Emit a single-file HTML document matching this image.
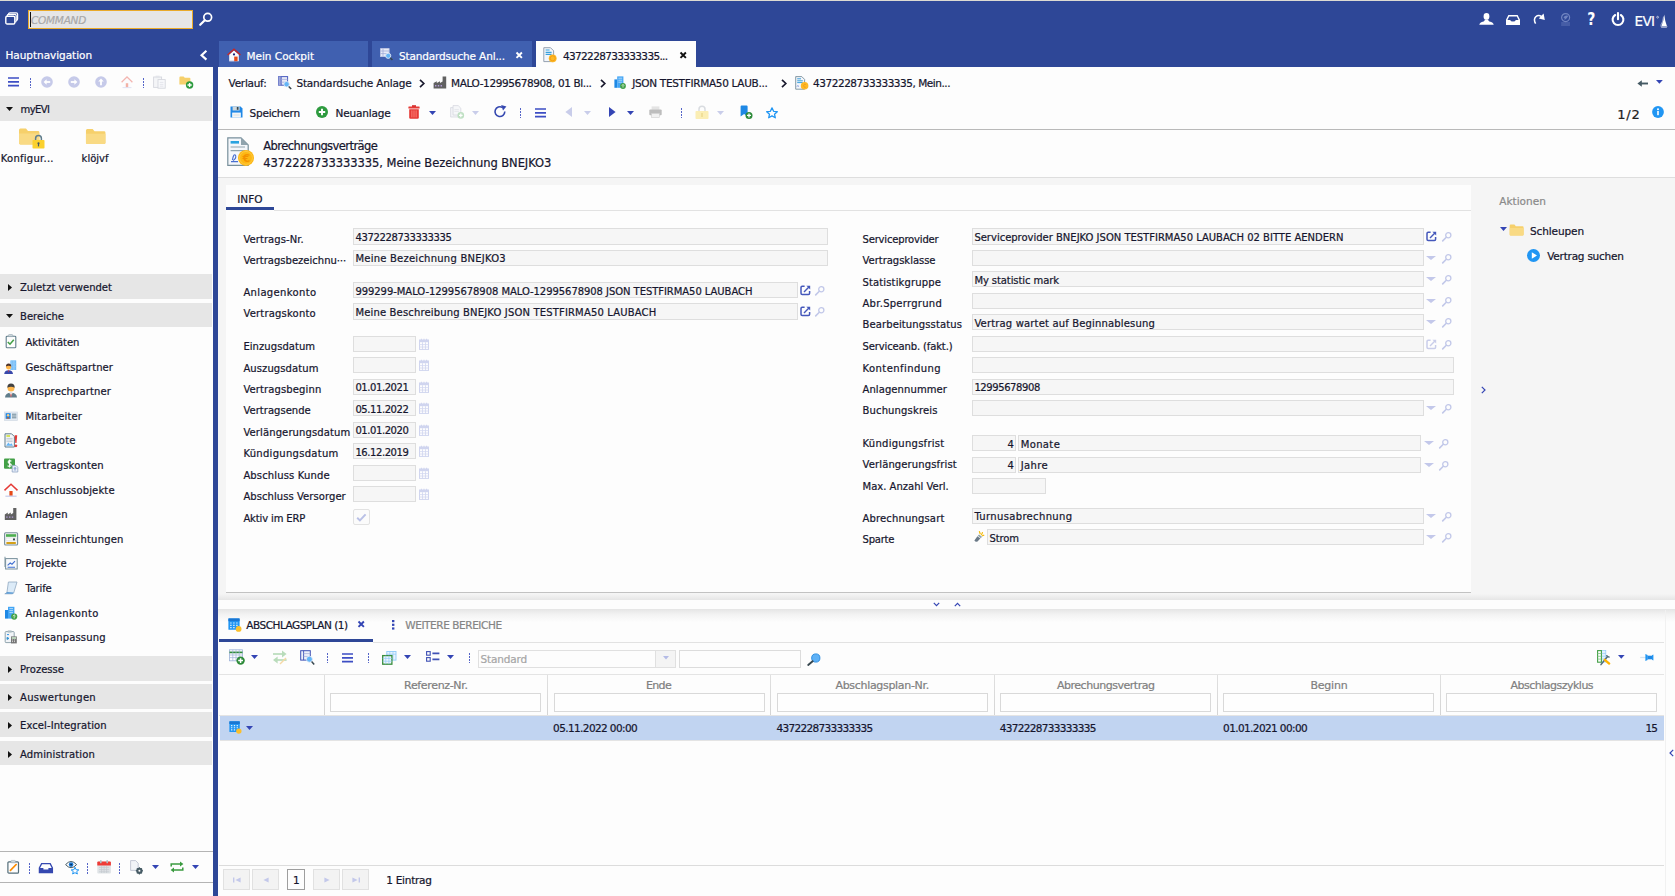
<!DOCTYPE html>
<html lang="de"><head><meta charset="utf-8"><title>EVI - Abrechnungsverträge</title>
<style>
html,body{margin:0;padding:0}
body{width:1675px;height:896px;overflow:hidden;position:relative;background:#fdfdfd;font-family:"DejaVu Sans", "Liberation Sans", sans-serif;font-size:10px}
body>div,body>span,body>svg{position:absolute;box-sizing:border-box}
body>span{white-space:pre;line-height:20px;height:20px;-webkit-text-stroke:0.22px}
body>svg{overflow:visible}
</style></head><body>
<div style="left:0px;top:0px;width:1675px;height:67px;background:#2e4797;"></div>
<div style="left:0px;top:0px;width:1675px;height:1px;background:#dcdad2;"></div>
<svg style="left:5px;top:12px" width="14" height="13" viewBox="0 0 14 13"><rect x="3.6" y="0.8" width="9" height="7.6" rx="1.3" fill="none" stroke="#fff" stroke-width="1.2"/><rect x="2.2" y="2.4" width="9" height="7.6" rx="1.3" fill="#2e4797" stroke="#fff" stroke-width="1.2"/><rect x="0.8" y="4.2" width="9" height="7.8" rx="1.3" fill="#2e4797" stroke="#fff" stroke-width="1.4"/></svg>
<div style="left:28px;top:10px;width:165px;height:19px;background:#e6e6e6;border:1px solid #e9aa2b;"></div>
<div style="left:30px;top:12px;width:1px;height:15px;background:#111;"></div>
<span style="left:31.00px;top:10px;font-size:10.5px;color:#a9a9a9;letter-spacing:-0.263px;font-style:italic;">COMMAND</span>
<svg style="left:199px;top:12px" width="14" height="14" viewBox="0 0 14 14"><circle cx="8.7" cy="5.3" r="3.9" fill="none" stroke="#fff" stroke-width="1.7"/><path d="M5.8 8.2L1.2 12.8" stroke="#fff" stroke-width="2.2" stroke-linecap="round"/></svg>
<svg style="left:1479px;top:13px" width="15" height="12" viewBox="0 0 15 12"><ellipse cx="7.5" cy="3.4" rx="2.9" ry="3.3" fill="#fff"/><path d="M0.3 11.8Q0.5 9.4 4.6 8.4Q5.8 8 5.8 6.4H9.2Q9.2 8 10.4 8.4Q14.5 9.4 14.7 11.8Z" fill="#fff"/></svg>
<svg style="left:1505.5px;top:15.3px" width="14" height="10" viewBox="0 0 14 10"><path d="M2.8 0.7H11.2L13.3 4.9V9.3H0.7V4.9Z" fill="none" stroke="#fff" stroke-width="1.4"/><path d="M0.7 5H4.2Q4.6 6.6 7 6.6Q9.4 6.6 9.8 5H13.3V9.3H0.7Z" fill="#fff"/></svg>
<svg style="left:1533px;top:13px" width="13" height="12" viewBox="0 0 13 12"><path d="M2.6 10.6Q0.2 6.4 2.8 3.8Q5.4 1.4 8.6 3.6" fill="none" stroke="#fff" stroke-width="1.5"/><path d="M10.6 0.6L11.8 7L5.8 5.6Z" fill="#fff"/></svg>
<svg style="left:1560px;top:13px" width="11" height="13" viewBox="0 0 11 13"><circle cx="5.6" cy="4.6" r="4" fill="none" stroke="#7084c1" stroke-width="1.2"/><path d="M3.4 4.2Q5.4 1.6 8.2 2.8Q7.4 5.6 4.6 7Q5.4 5.2 3.4 4.2Z" fill="#7084c1"/><path d="M1.2 10H10M1.2 12H10" stroke="#6579b9" stroke-width="0.9"/></svg>
<svg style="left:1586px;top:11px" width="12" height="16" viewBox="0 0 12 16"><text x="1.6" y="14.4" transform="scale(0.8 1)" font-family="DejaVu Sans, Liberation Sans, sans-serif" font-size="17.5" font-weight="bold" fill="#fff">?</text></svg>
<svg style="left:1611px;top:12px" width="14" height="14" viewBox="0 0 14 14"><path d="M4.2 3A5.4 5.4 0 1 0 9.8 3" fill="none" stroke="#fff" stroke-width="2.1" stroke-linecap="round"/><path d="M7 1V7.2" stroke="#fff" stroke-width="2.1" stroke-linecap="round"/></svg>
<span style="left:1634.60px;top:11px;font-size:13.5px;color:#fff;letter-spacing:-0.650px;">EVI</span>
<svg style="left:1655.5px;top:14px" width="12" height="14" viewBox="0 0 12 14"><circle cx="1.6" cy="3.2" r="0.9" fill="none" stroke="#fff" stroke-width="0.6"/><path d="M8.2 0.4Q9 7 10.9 12H5.4Q8 6.5 8.2 0.4Z" fill="#fff"/><path d="M7.6 2.5Q7 8 4.6 11.6" stroke="#fff" stroke-width="0.5" fill="none"/><path d="M4.4 12.6H11.6L10.6 13.6H5.4Z" fill="#fff"/></svg>
<span style="left:5.50px;top:45px;font-size:10.5px;color:#fff;letter-spacing:-0.047px;">Hauptnavigation</span>
<svg style="left:199.5px;top:49.5px" width="8" height="11" viewBox="0 0 8 11"><path d="M6.4 0.8L1.6 5.2L6.4 9.6" fill="none" stroke="#fff" stroke-width="2.2"/></svg>
<div style="left:219px;top:41px;width:149px;height:26px;background:#4060b0;"></div>
<div style="left:372px;top:41px;width:160px;height:26px;background:#4060b0;"></div>
<div style="left:536px;top:41px;width:160px;height:26px;background:#fdfdfd;"></div>
<svg style="left:227px;top:47.5px" width="14" height="14" viewBox="0 0 14 14"><path d="M2.2 6.6L7 2.4L11.8 6.6V13.2H2.2Z" fill="#fafafc"/><path d="M0.6 7L7 1.2L13.4 7" fill="none" stroke="#c62828" stroke-width="1.5"/><circle cx="7" cy="6.4" r="1.1" fill="#1a237e"/><rect x="7.2" y="8.6" width="3.4" height="4.6" fill="#e64a19"/><path d="M2.2 12.8H7" stroke="#c5cae9" stroke-width="0.8"/></svg>
<span style="left:246.50px;top:46px;font-size:10.5px;color:#fff;letter-spacing:-0.021px;">Mein Cockpit</span>
<svg style="left:380px;top:48px" width="13" height="13" viewBox="0 0 13 13"><rect x="0.6" y="0.6" width="8.5" height="8" fill="#e8ecf8" stroke="#c7cde6" stroke-width="0.8"/><path d="M3 0.6V8.6M0.6 3H9M0.6 5.6H9" stroke="#9aa6d6" stroke-width="0.7"/><circle cx="8.2" cy="7.8" r="2.6" fill="#64b5f6" stroke="#dfe6f5" stroke-width="0.9"/><path d="M10.2 9.8L12.4 12" stroke="#37474f" stroke-width="1.5"/></svg>
<span style="left:399.00px;top:46px;font-size:10.5px;color:#fff;letter-spacing:-0.145px;">Standardsuche Anl...</span>
<svg style="left:516.0px;top:52.4px" width="6.4" height="6.4" viewBox="0 0 6.4 6.4"><path d="M0.5 0.5L5.9 5.9M5.9 0.5L0.5 5.9" stroke="#fff" stroke-width="1.9"/></svg>
<svg style="left:543px;top:47px" width="14" height="16" viewBox="0 0 14 16"><path d="M0.8 0.7H7.5L10.6 3.8V14.6H0.8Z" fill="#f3f6fb" stroke="#8a97a8" stroke-width="0.9"/><path d="M2.6 3H6.6M2.6 5.4H8.6M2.6 7.4H8.6" stroke="#39a0dc" stroke-width="1.1"/><circle cx="9.7" cy="11.3" r="3.9" fill="#fdb827"/><circle cx="9.7" cy="11.3" r="2.5" fill="none" stroke="#f09a12" stroke-width="0.8"/></svg>
<span style="left:563.00px;top:46px;font-size:10.5px;color:#16162e;letter-spacing:-0.653px;">4372228733333335...</span>
<svg style="left:680.0999999999999px;top:52.4px" width="6.4" height="6.4" viewBox="0 0 6.4 6.4"><path d="M0.5 0.5L5.9 5.9M5.9 0.5L0.5 5.9" stroke="#111" stroke-width="1.9"/></svg>
<div style="left:0px;top:67px;width:213px;height:829px;background:#fdfdfd;"></div>
<div style="left:213px;top:67px;width:5px;height:829px;background:#2e4797;"></div>
<svg style="left:7.5px;top:77px" width="12" height="10" viewBox="0 0 12 10"><path d="M0 1H11M0 4.8H11M0 8.6H11" stroke="#3d4ec4" stroke-width="1.7"/></svg>
<div style="left:30px;top:78px;width:1px;height:10px;background:repeating-linear-gradient(#5565c8 0,#5565c8 2px,transparent 2px,transparent 3px)"></div>
<svg style="left:41px;top:76px" width="12" height="12" viewBox="0 0 12 12"><circle cx="6" cy="6" r="5.8" fill="#c6cae9"/><g transform="rotate(0 6 6)"><path d="M9.2 6H4" stroke="#fff" stroke-width="1.8"/><path d="M5.6 3.2L2.6 6L5.6 8.8Z" fill="#fff"/></g></svg>
<svg style="left:68px;top:76px" width="12" height="12" viewBox="0 0 12 12"><circle cx="6" cy="6" r="5.8" fill="#c6cae9"/><g transform="rotate(180 6 6)"><path d="M9.2 6H4" stroke="#fff" stroke-width="1.8"/><path d="M5.6 3.2L2.6 6L5.6 8.8Z" fill="#fff"/></g></svg>
<svg style="left:94.5px;top:76px" width="12" height="12" viewBox="0 0 12 12"><circle cx="6" cy="6" r="5.8" fill="#c6cae9"/><g transform="rotate(90 6 6)"><path d="M9.2 6H4" stroke="#fff" stroke-width="1.8"/><path d="M5.6 3.2L2.6 6L5.6 8.8Z" fill="#fff"/></g></svg>
<svg style="left:121px;top:76px" width="12" height="12" viewBox="0 0 12 12"><path d="M0.6 6.2L6 1L11.4 6.2" fill="none" stroke="#f3b6b1" stroke-width="1.3"/><path d="M2.3 6L6 2.6L9.7 6V11.4H2.3Z" fill="#fbfbfd"/><rect x="4.8" y="7.2" width="2.4" height="4.2" fill="#f2b1a6"/><path d="M1.5 11.6H10.5" stroke="#dcdff3" stroke-width="0.9"/></svg>
<div style="left:143px;top:78px;width:1px;height:10px;background:repeating-linear-gradient(#5565c8 0,#5565c8 2px,transparent 2px,transparent 3px)"></div>
<svg style="left:153px;top:75px" width="13" height="14" viewBox="0 0 13 14"><rect x="0.6" y="2" width="8" height="10.4" fill="#f4f5f7" stroke="#d5d7de" stroke-width="0.9"/><rect x="2.6" y="0.7" width="4" height="2.4" fill="#e3e5ea"/><rect x="5" y="4.6" width="7.2" height="8.6" fill="#f8f9fb" stroke="#d5d7de" stroke-width="0.9"/><path d="M6.8 7.4H10.4M6.8 9.4H10.4M6.8 11.2H10.4" stroke="#dfe1e8" stroke-width="0.8"/></svg>
<svg style="left:179px;top:76px" width="15" height="13" viewBox="0 0 15 13"><path d="M0.4 1.4Q0.4 0.4 1.4 0.4H4.6L5.8 1.8H10.4Q11.4 1.8 11.4 2.8V8.6H0.4Z" fill="#f6d06b"/><circle cx="10.6" cy="9" r="3.7" fill="#2e9b3f"/><path d="M10.6 6.9V11.1M8.5 9H12.7" stroke="#fff" stroke-width="1.4"/></svg>
<div style="left:0px;top:96px;width:212px;height:25px;background:#e6e6e6;"></div>
<svg style="left:5.5px;top:107px" width="7" height="4" viewBox="0 0 7 4"><path d="M0 0H7L3.5 4Z" fill="#111"/></svg>
<span style="left:20.50px;top:100px;font-size:10px;color:#16162e;letter-spacing:-0.556px;">myEVI</span>
<svg style="left:18px;top:128px" width="22" height="17" viewBox="0 0 22 17"><path d="M1 2.2Q1 0.6 2.4 0.6H8L10 3H20Q21.4 3 21.4 4.4V15Q21.4 16.4 20 16.4H2.4Q1 16.4 1 15Z" fill="#f6d06b"/><path d="M1 5.5H21.4V15Q21.4 16.4 20 16.4H2.4Q1 16.4 1 15Z" fill="#f9da84"/></svg>
<svg style="left:32px;top:134px" width="13" height="15" viewBox="0 0 13 15"><path d="M3.6 6.5V4.4A2.9 2.9 0 0 1 9.4 4.4V6.5" fill="none" stroke="#607d8b" stroke-width="1.5"/><rect x="0.5" y="6" width="12" height="8.5" rx="0.8" fill="#fbd12e"/><circle cx="6.5" cy="9.3" r="1.1" fill="#455a64"/><rect x="5.9" y="9.6" width="1.2" height="2.8" fill="#455a64"/></svg>
<svg style="left:85px;top:128px" width="21" height="17" viewBox="0 0 22 17"><path d="M1 2.2Q1 0.6 2.4 0.6H8L10 3H20Q21.4 3 21.4 4.4V15Q21.4 16.4 20 16.4H2.4Q1 16.4 1 15Z" fill="#f6d06b"/><path d="M1 5.5H21.4V15Q21.4 16.4 20 16.4H2.4Q1 16.4 1 15Z" fill="#f9da84"/></svg>
<span style="left:0.80px;top:149px;font-size:10px;color:#16162e;letter-spacing:0.251px;">Konfigur...</span>
<span style="left:81.60px;top:149px;font-size:10px;color:#16162e;letter-spacing:0.016px;">klöjvf</span>
<div style="left:0px;top:274px;width:212px;height:25px;background:#e6e6e6;"></div>
<svg style="left:8px;top:284px" width="4" height="7" viewBox="0 0 4 7"><path d="M0 0L4 3.5L0 7Z" fill="#111"/></svg>
<span style="left:20.00px;top:278px;font-size:10px;color:#16162e;letter-spacing:0.019px;">Zuletzt verwendet</span>
<div style="left:0px;top:303px;width:212px;height:24px;background:#e6e6e6;"></div>
<svg style="left:5.8px;top:314px" width="7" height="4" viewBox="0 0 7 4"><path d="M0 0H7L3.5 4Z" fill="#111"/></svg>
<span style="left:20.00px;top:307px;font-size:10px;color:#16162e;letter-spacing:0.021px;">Bereiche</span>
<div style="left:0px;top:656px;width:212px;height:25px;background:#e6e6e6;"></div>
<svg style="left:8px;top:666px" width="4" height="7" viewBox="0 0 4 7"><path d="M0 0L4 3.5L0 7Z" fill="#111"/></svg>
<span style="left:20.00px;top:660px;font-size:10px;color:#16162e;letter-spacing:0.020px;">Prozesse</span>
<div style="left:0px;top:684px;width:212px;height:25px;background:#e6e6e6;"></div>
<svg style="left:8px;top:694px" width="4" height="7" viewBox="0 0 4 7"><path d="M0 0L4 3.5L0 7Z" fill="#111"/></svg>
<span style="left:20.00px;top:688px;font-size:10px;color:#16162e;letter-spacing:0.311px;">Auswertungen</span>
<div style="left:0px;top:712px;width:212px;height:25px;background:#e6e6e6;"></div>
<svg style="left:8px;top:722px" width="4" height="7" viewBox="0 0 4 7"><path d="M0 0L4 3.5L0 7Z" fill="#111"/></svg>
<span style="left:20.00px;top:716px;font-size:10px;color:#16162e;letter-spacing:0.088px;">Excel-Integration</span>
<div style="left:0px;top:741px;width:212px;height:24px;background:#e6e6e6;"></div>
<svg style="left:8px;top:751px" width="4" height="7" viewBox="0 0 4 7"><path d="M0 0L4 3.5L0 7Z" fill="#111"/></svg>
<span style="left:20.00px;top:745px;font-size:10px;color:#16162e;letter-spacing:0.129px;">Administration</span>
<span style="left:25.40px;top:333px;font-size:10px;color:#16162e;letter-spacing:-0.045px;">Aktivitäten</span>
<span style="left:25.40px;top:358px;font-size:10px;color:#16162e;letter-spacing:0.052px;">Geschäftspartner</span>
<span style="left:25.40px;top:382px;font-size:10px;color:#16162e;letter-spacing:0.124px;">Ansprechpartner</span>
<span style="left:25.40px;top:407px;font-size:10px;color:#16162e;letter-spacing:0.143px;">Mitarbeiter</span>
<span style="left:25.40px;top:431px;font-size:10px;color:#16162e;letter-spacing:0.273px;">Angebote</span>
<span style="left:25.40px;top:456px;font-size:10px;color:#16162e;letter-spacing:0.146px;">Vertragskonten</span>
<span style="left:25.40px;top:481px;font-size:10px;color:#16162e;letter-spacing:0.142px;">Anschlussobjekte</span>
<span style="left:25.40px;top:505px;font-size:10px;color:#16162e;letter-spacing:0.209px;">Anlagen</span>
<span style="left:25.40px;top:530px;font-size:10px;color:#16162e;letter-spacing:0.215px;">Messeinrichtungen</span>
<span style="left:25.40px;top:554px;font-size:10px;color:#16162e;letter-spacing:0.091px;">Projekte</span>
<span style="left:25.40px;top:579px;font-size:10px;color:#16162e;letter-spacing:-0.176px;">Tarife</span>
<span style="left:25.40px;top:604px;font-size:10px;color:#16162e;letter-spacing:0.370px;">Anlagenkonto</span>
<span style="left:25.40px;top:628px;font-size:10px;color:#16162e;letter-spacing:0.144px;">Preisanpassung</span>
<svg style="left:3.9px;top:334px" width="14" height="15" viewBox="0 0 14 15"><rect x="2.2" y="2.2" width="9.6" height="11.6" rx="0.9" fill="#fdfdfd" stroke="#607d8b" stroke-width="1.1"/><path d="M4.4 2.6V1.4Q4.4 0.6 5.2 0.6H8Q8.8 0.6 8.8 1.4V2.6Z" fill="#cfd8dc" stroke="#90a4ae" stroke-width="0.6"/><path d="M3.8 8L6 10.2L9.8 5.8" fill="none" stroke="#43a047" stroke-width="1.6"/></svg>
<svg style="left:3.9px;top:360px" width="14" height="14" viewBox="0 0 14 14"><rect x="6.4" y="0.4" width="5.8" height="9.6" fill="#64b5f6"/><path d="M7.8 0.8V10M9.3 0.8V10M10.8 0.8V10" stroke="#bbdefb" stroke-width="0.6"/><path d="M6.4 3.4H12.2M6.4 6.4H12.2" stroke="#90caf9" stroke-width="0.5"/><circle cx="4.6" cy="6.8" r="2.6" fill="#ffb74d"/><path d="M1.9 6.6Q2 3.6 4.6 3.6Q7.2 3.6 7.3 6.6Q4.6 5 1.9 6.6Z" fill="#4e342e"/><path d="M0.2 14Q0.4 10.2 4.6 10.2Q8.8 10.2 9 14Z" fill="#3949ab"/><path d="M3.8 10.4L4.6 12L5.4 10.4Z" fill="#e53935"/></svg>
<svg style="left:3.9px;top:383px" width="14" height="15" viewBox="0 0 14 15"><circle cx="7" cy="5" r="3.5" fill="#ffb74d"/><path d="M3.3 4.8Q3.4 0.6 7 0.6Q10.6 0.6 10.7 4.8Q7 2.6 3.3 4.8Z" fill="#424242"/><path d="M1 14.6Q1.2 9.8 7 9.8Q12.8 9.8 13 14.6Z" fill="#607d8b"/><path d="M5.4 9.9L7 12.6L8.6 9.9Z" fill="#eceff1"/><path d="M6.6 10.6H7.4L7.8 13.6H6.2Z" fill="#e57373"/></svg>
<svg style="left:3.9px;top:409px" width="14" height="14" viewBox="0 0 14 14"><rect x="0.6" y="3" width="12.8" height="8.4" fill="#e3eaf3" stroke="#cfd8e3" stroke-width="0.7"/><rect x="1.6" y="4.2" width="5" height="5.6" fill="#1e88e5"/><circle cx="4.1" cy="6.2" r="1.2" fill="#ffcc80"/><path d="M2.4 9.6Q4.1 6.8 5.8 9.6Z" fill="#e65100"/><path d="M8 5.2H12.4M8 7H12.4M8 8.8H12.4" stroke="#607d8b" stroke-width="0.9"/></svg>
<svg style="left:3.9px;top:433px" width="14" height="15" viewBox="0 0 14 15"><path d="M1 0.8H7.6L10.4 3.6V14H1Z" fill="#f5f7fa" stroke="#607d8b" stroke-width="1"/><rect x="2.4" y="2.2" width="3.6" height="1.6" fill="#cddc39"/><path d="M2.4 5.4H8.6M2.4 7H8.6M2.4 8.6H8.6" stroke="#b0bec5" stroke-width="0.7"/><path d="M2 12.8L4.4 9.4L6 11.4L7.4 10.2L9 12.8Z" fill="#64b5f6"/><path d="M10.6 2.2H13.2L12.5 10H11.3Z" fill="#e53935"/><circle cx="11.9" cy="12.8" r="1.4" fill="#e53935"/></svg>
<svg style="left:3.9px;top:458px" width="14" height="14" viewBox="0 0 14 14"><rect x="0" y="0.4" width="11" height="10.4" rx="1" fill="#43a047"/><path d="M7.4 3.2Q5.6 2 4.4 3.2Q3.6 4.6 5.6 5.4Q7.8 6.2 7 7.8Q5.6 9 3.6 7.8M5.6 1.4V9.6" fill="none" stroke="#fff" stroke-width="1.1"/><path d="M8.2 7.4H12L13.8 9.2V14H8.2Z" fill="#e8eef8" stroke="#90a4c4" stroke-width="0.8"/><path d="M11 9.6V12.6M10 10.6L11 9.6L12 10.6" stroke="#5c7bc0" stroke-width="0.8" fill="none"/></svg>
<svg style="left:3.9px;top:483px" width="14" height="14" viewBox="0 0 14 14"><path d="M0.5 7.4L7 1.2L13.5 7.4" fill="none" stroke="#e53935" stroke-width="1.5"/><path d="M2.4 7L7 2.8L11.6 7V12.6H2.4Z" fill="#fdfdfd"/><rect x="5.4" y="8" width="3.2" height="4.8" fill="#e64a19"/><path d="M1.4 13.2H12.6" stroke="#c5cae9" stroke-width="1.2"/></svg>
<svg style="left:3.9px;top:507px" width="14" height="14" viewBox="0 0 14 14"><path d="M0.8 13V7.4L3.8 5.6V7.4L6.8 5.6V7.4L9.2 6V1H12.4V13Z" fill="#616161"/><path d="M2.2 9.4H3.6V10.8H2.2ZM5 9.4H6.4V10.8H5ZM7.8 9.4H9.2V10.8H7.8Z" fill="#b39ddb"/></svg>
<svg style="left:3.9px;top:532px" width="14" height="14" viewBox="0 0 14 14"><rect x="0.6" y="0.8" width="13" height="12.2" rx="1" fill="#f5f5f5" stroke="#78909c" stroke-width="1.1"/><rect x="2" y="2.2" width="10.2" height="2.6" fill="#4caf50"/><rect x="2" y="6" width="10.2" height="2.8" fill="#fafafa" stroke="#cfd8dc" stroke-width="0.5"/><circle cx="10" cy="7.4" r="1.1" fill="#37474f"/><rect x="2.4" y="10" width="9.4" height="2" fill="#d4a017"/></svg>
<svg style="left:3.9px;top:556px" width="14" height="14" viewBox="0 0 14 14"><path d="M1 0.8V11" stroke="#90a4ae" stroke-width="1.2"/><rect x="1.6" y="2.6" width="11.6" height="10.4" fill="#f7f9fc" stroke="#78909c" stroke-width="1"/><path d="M3.6 9.4L6.2 7L8 8.2L11 5.2M3.6 11.2H11" fill="none" stroke="#3f6fd1" stroke-width="1.1"/></svg>
<svg style="left:3.9px;top:581px" width="14" height="14" viewBox="0 0 14 14"><path d="M4.4 1H13L9.8 11.6Q9.4 12.8 8 12.8H0.8Q2.6 12.4 3 11Z" fill="#dcebf8" stroke="#90a8c0" stroke-width="0.8"/><path d="M0.8 12.8H8Q9.4 12.8 9.8 11.6L3 11Q2.6 12.4 0.8 12.8Z" fill="#5b9bd5"/></svg>
<svg style="left:3.9px;top:606px" width="14" height="14" viewBox="0 0 14 14"><rect x="1" y="4" width="3" height="8.6" fill="#1e88e5"/><rect x="4" y="0.8" width="6.4" height="11.8" fill="#42a5f5"/><path d="M5.4 2.6H9M5.4 4.6H9M5.4 6.6H9" stroke="#bbdefb" stroke-width="0.9"/><circle cx="10.2" cy="10.6" r="3.1" fill="#43a047"/><path d="M10.2 12.4V9M8.8 10.2L10.2 8.8L11.6 10.2" stroke="#c8e6c9" stroke-width="0.9" fill="none"/></svg>
<svg style="left:3.9px;top:630px" width="14" height="14" viewBox="0 0 14 14"><rect x="1.2" y="1.6" width="9" height="11" rx="0.8" fill="#f1f4f7" stroke="#90a4ae" stroke-width="1"/><rect x="3.8" y="0.4" width="3.8" height="2.2" fill="#b0bec5"/><path d="M3 4.6H5M3 7.4L5 8.4L3 9.4Z" stroke="#1e88e5" stroke-width="0.9" fill="#8bc34a"/><rect x="7" y="6.4" width="5.8" height="7" fill="#757575"/><rect x="7.8" y="7.2" width="4.2" height="1.6" fill="#c8e6c9"/><path d="M8 10H9M10 10H11M8 11.6H9M10 11.6H11" stroke="#e0e0e0" stroke-width="0.9"/></svg>
<div style="left:0px;top:851px;width:213px;height:1px;background:#b4b4b4;"></div>
<div style="left:0px;top:882px;width:213px;height:1px;background:#b4b4b4;"></div>
<svg style="left:7px;top:860px" width="13" height="14" viewBox="0 0 13 14"><rect x="0.9" y="1.8" width="10.6" height="11.4" rx="1" fill="#fdfdfd" stroke="#546e7a" stroke-width="1.2"/><rect x="4" y="0.4" width="4.4" height="2.4" rx="0.6" fill="#cfd8dc" stroke="#90a4ae" stroke-width="0.5"/><path d="M3 10.8L9.6 4" stroke="#fb8c00" stroke-width="1.7"/></svg>
<div style="left:29px;top:863px;width:1px;height:11px;background:repeating-linear-gradient(#5565c8 0,#5565c8 2px,transparent 2px,transparent 3px)"></div>
<svg style="left:39px;top:863px" width="14" height="10" viewBox="0 0 14 10"><path d="M2.6 0.6H11.2L13.4 5V9.6H0.4V5Z" fill="none" stroke="#3548b0" stroke-width="1.3"/><path d="M0.4 5H4.4V6.4H9.4V5H13.4V9.6H0.4Z" fill="#3548b0"/></svg>
<svg style="left:65px;top:860px" width="15" height="14" viewBox="0 0 15 14"><path d="M0.6 4.6Q6 -1.6 11.6 4.6Q6 10.8 0.6 4.6Z" fill="#fdfdfd" stroke="#455a64" stroke-width="1"/><circle cx="6.1" cy="4.6" r="2.3" fill="#1976d2"/><circle cx="6.1" cy="4.6" r="0.9" fill="#0d2a4a"/><path d="M10 7.2L11.1 9.7L13.8 9.9L11.7 11.6L12.4 14L10 12.7L7.6 14L8.3 11.6L6.2 9.9L8.9 9.7Z" fill="#fdfdfd" stroke="#2196f3" stroke-width="1"/></svg>
<div style="left:87px;top:863px;width:1px;height:11px;background:repeating-linear-gradient(#5565c8 0,#5565c8 2px,transparent 2px,transparent 3px)"></div>
<svg style="left:97px;top:860px" width="14" height="14" viewBox="0 0 14 14"><rect x="0.3" y="1.6" width="13.6" height="12" rx="1" fill="#dfe3e6"/><path d="M0.3 2.6Q0.3 1.6 1.3 1.6H12.9Q13.9 1.6 13.9 2.6V5.4H0.3Z" fill="#ef3b36"/><rect x="3" y="0.2" width="1.6" height="3" fill="#b0bec5"/><rect x="9.4" y="0.2" width="1.6" height="3" fill="#b0bec5"/><path d="M2 7.4H12.2M2 9.6H12.2M2 11.8H12.2M4.6 6V13M7.1 6V13M9.6 6V13" stroke="#c3c9ce" stroke-width="0.7"/></svg>
<div style="left:119px;top:863px;width:1px;height:11px;background:repeating-linear-gradient(#5565c8 0,#5565c8 2px,transparent 2px,transparent 3px)"></div>
<svg style="left:130px;top:860px" width="14" height="15" viewBox="0 0 14 15"><path d="M0.6 0.6H5.6L8.2 3.2V10.4H0.6Z" fill="#f2f4f8" stroke="#b7bdcb" stroke-width="0.8"/><circle cx="9.4" cy="10.8" r="2.4" fill="none" stroke="#455a64" stroke-width="1.5"/><path d="M9.4 7.2V14.4M5.8 10.8H13M6.9 8.3L11.9 13.3M11.9 8.3L6.9 13.3" stroke="#455a64" stroke-width="1.1"/><circle cx="9.4" cy="10.8" r="1" fill="#fdfdfd"/></svg>
<svg style="left:151.5px;top:865px" width="7" height="4" viewBox="0 0 7 4"><path d="M0 0H7L3.5 4Z" fill="#3445b4"/></svg>
<svg style="left:170px;top:861px" width="14" height="12" viewBox="0 0 14 12"><path d="M1.2 5.4V3H11.4" fill="none" stroke="#3a9a3f" stroke-width="1.5"/><path d="M10 0.4L13.4 3L10 5.6Z" fill="#3a9a3f"/><path d="M12.8 6.6V9H2.6" fill="none" stroke="#3a9a3f" stroke-width="1.5"/><path d="M4 6.4L0.6 9L4 11.6Z" fill="#3a9a3f"/></svg>
<svg style="left:191.5px;top:865px" width="7" height="4" viewBox="0 0 7 4"><path d="M0 0H7L3.5 4Z" fill="#3445b4"/></svg>
<div style="left:218px;top:67px;width:1457px;height:62px;background:#fdfdfd;"></div>
<span style="left:228.60px;top:73px;font-size:10.5px;color:#16162e;letter-spacing:-0.277px;">Verlauf:</span>
<svg style="left:277.5px;top:75.5px" width="14" height="14" viewBox="0 0 14 14"><rect x="0.6" y="0.6" width="9" height="8.6" fill="#e8eaf6" stroke="#4a5bbf" stroke-width="1"/><rect x="0.6" y="0.6" width="2.6" height="8.6" fill="#9fa8da"/><path d="M3.2 0.6V9.2" stroke="#4a5bbf" stroke-width="0.9"/><path d="M3.2 3.4H9.6M3.2 6.2H9.6" stroke="#9fa8da" stroke-width="0.7"/><circle cx="8.6" cy="8.2" r="2.7" fill="#64b5f6" stroke="#e3ecf8" stroke-width="0.8"/><path d="M10.7 10.4L13.2 13" stroke="#37474f" stroke-width="1.5"/></svg>
<span style="left:296.40px;top:73px;font-size:10.5px;color:#16162e;letter-spacing:-0.162px;">Standardsuche Anlage</span>
<svg style="left:419px;top:78.5px" width="6" height="9" viewBox="0 0 6 9"><path d="M1 0.8L4.8 4.5L1 8.2" fill="none" stroke="#1a1a2e" stroke-width="1.7"/></svg>
<svg style="left:432.5px;top:76px" width="14" height="13" viewBox="0 0 14 13"><path d="M0.6 12.6V7L3.8 5.2V7L7 5.2V7L9.6 5.6V0.6H13.2V12.6Z" fill="#616161"/><path d="M2 9H3.4V10.4H2ZM4.8 9H6.2V10.4H4.8ZM7.6 9H9V10.4H7.6Z" fill="#b39ddb"/></svg>
<span style="left:451.10px;top:73px;font-size:10.5px;color:#16162e;letter-spacing:-0.410px;">MALO-12995678908, 01 Bl...</span>
<svg style="left:600.3px;top:78.5px" width="6" height="9" viewBox="0 0 6 9"><path d="M1 0.8L4.8 4.5L1 8.2" fill="none" stroke="#1a1a2e" stroke-width="1.7"/></svg>
<svg style="left:614px;top:75.5px" width="12" height="13" viewBox="0 0 12 13"><rect x="0.4" y="3.4" width="2.8" height="8.4" fill="#1e88e5"/><rect x="3.2" y="0.4" width="6.2" height="11.4" fill="#42a5f5"/><path d="M4.4 2.2H8.2M4.4 4.2H8.2M4.4 6.2H8.2" stroke="#bbdefb" stroke-width="0.9"/><circle cx="9" cy="10" r="2.9" fill="#43a047"/><path d="M9 11.6V8.6M7.8 9.6L9 8.4L10.2 9.6" stroke="#c8e6c9" stroke-width="0.9" fill="none"/></svg>
<span style="left:632.20px;top:73px;font-size:10.5px;color:#16162e;letter-spacing:-0.317px;">JSON TESTFIRMA50 LAUB...</span>
<svg style="left:780.7px;top:78.5px" width="6" height="9" viewBox="0 0 6 9"><path d="M1 0.8L4.8 4.5L1 8.2" fill="none" stroke="#1a1a2e" stroke-width="1.7"/></svg>
<svg style="left:794.5px;top:75.5px" width="14" height="14" viewBox="0 0 14 14"><path d="M0.7 0.6H6.8L9.6 3.4V13.2H0.7Z" fill="#f3f6fb" stroke="#78909c" stroke-width="0.9"/><path d="M2.2 2.8H6M2.2 4.8H7.8M2.2 6.6H7.8" stroke="#39a0dc" stroke-width="1"/><path d="M2 10.6Q3 8.4 3.6 10.6" fill="none" stroke="#5c7bd0" stroke-width="0.8"/><circle cx="9.6" cy="9.8" r="3.8" fill="#fdb827"/><path d="M10.8 8.4Q9.2 7.4 8.6 9.8Q9.2 12.2 10.8 11.2" fill="none" stroke="#f09a12" stroke-width="0.8"/></svg>
<span style="left:813.10px;top:73px;font-size:10.5px;color:#16162e;letter-spacing:-0.467px;">4372228733333335, Mein...</span>
<svg style="left:1636.5px;top:79.4px" width="12" height="9" viewBox="0 0 12 9"><path d="M11 4.5H3.4" stroke="#455a64" stroke-width="1.9"/><path d="M0.4 4.5L4.8 1.2V7.8Z" fill="#455a64"/></svg>
<svg style="left:1656.2px;top:80.2px" width="6.8" height="3.8" viewBox="0 0 6.8 3.8"><path d="M0 0H6.8L3.4 3.8Z" fill="#3445b4"/></svg>
<span style="left:1617.30px;top:105px;font-size:13px;color:#222;letter-spacing:0.759px;">1/2</span>
<svg style="left:1652px;top:106px" width="12" height="12" viewBox="0 0 12 12"><circle cx="6" cy="6" r="5.9" fill="#2196f3"/><rect x="5.2" y="5" width="1.6" height="4.2" fill="#fff"/><circle cx="6" cy="3.2" r="1" fill="#fff"/></svg>
<svg style="left:229.5px;top:106px" width="13" height="12" viewBox="0 0 13 12"><path d="M0.5 0.5H10.6L12.5 2.4V11.5H0.5Z" fill="#2088e6"/><rect x="2.6" y="0.5" width="7" height="4" fill="#cfd8dc"/><rect x="6.8" y="1" width="1.7" height="2.8" fill="#37474f"/><rect x="2.2" y="6.6" width="8.6" height="4.9" fill="#fdfdfd"/><path d="M3.2 8.2H9.8M3.2 9.8H9.8" stroke="#cfd8dc" stroke-width="0.7"/></svg>
<span style="left:249.60px;top:103px;font-size:10.5px;color:#16162e;letter-spacing:-0.243px;">Speichern</span>
<svg style="left:316px;top:106px" width="12" height="12" viewBox="0 0 12 12"><circle cx="6" cy="6" r="6" fill="#2e9b3f"/><path d="M6 2.8V9.2M2.8 6H9.2" stroke="#fff" stroke-width="1.9"/></svg>
<span style="left:335.50px;top:103px;font-size:10.5px;color:#16162e;letter-spacing:-0.172px;">Neuanlage</span>
<svg style="left:407.5px;top:104.5px" width="12" height="14" viewBox="0 0 12 14"><rect x="4" y="0.2" width="4" height="2" fill="#d32f2f"/><rect x="0.4" y="1.6" width="11.2" height="1.9" rx="0.5" fill="#e53935"/><path d="M1.2 4.2H10.8V12.6Q10.8 13.8 9.6 13.8H2.4Q1.2 13.8 1.2 12.6Z" fill="#e53935"/><path d="M3.9 5.4V12.4M6 5.4V12.4M8.1 5.4V12.4" stroke="#ff8a80" stroke-width="0.9"/></svg>
<svg style="left:428.5px;top:110.5px" width="7" height="4" viewBox="0 0 7 4"><path d="M0 0H7L3.5 4Z" fill="#3445b4"/></svg>
<svg style="left:450px;top:105px" width="15" height="14" viewBox="0 0 15 14"><path d="M0.6 2.6H5.8L8.4 5.2V12H0.6Z" fill="#f3f4f7" stroke="#d5d8e0" stroke-width="0.8"/><path d="M3 0.6H8.2L10.8 3.2V10H3Z" fill="#f6f7f9" stroke="#d5d8e0" stroke-width="0.8"/><path d="M4.4 4.6H8.8M4.4 6.4H8.8" stroke="#dfe2e8" stroke-width="0.8"/><circle cx="10.8" cy="10.4" r="3.3" fill="#bfe0c3"/><path d="M10.8 8.6V12.2M9 10.4H12.6" stroke="#fff" stroke-width="1.2"/></svg>
<svg style="left:471.5px;top:110.5px" width="7" height="4" viewBox="0 0 7 4"><path d="M0 0H7L3.5 4Z" fill="#c9cdea"/></svg>
<svg style="left:493.5px;top:105px" width="13" height="13" viewBox="0 0 13 13"><path d="M10.8 6.6A4.9 4.9 0 1 1 8.4 2.4" fill="none" stroke="#3548b0" stroke-width="1.6"/><path d="M7.2 0L12.4 1.4L9 5.4Z" fill="#3548b0"/></svg>
<div style="left:520px;top:108px;width:1px;height:10px;background:repeating-linear-gradient(#5565c8 0,#5565c8 2px,transparent 2px,transparent 3px)"></div>
<svg style="left:535px;top:107.5px" width="12" height="10" viewBox="0 0 12 10"><path d="M0 1H11M0 4.8H11M0 8.6H11" stroke="#3d4ec4" stroke-width="1.7"/></svg>
<svg style="left:564.5px;top:107px" width="7" height="10" viewBox="0 0 7 10"><path d="M7 0V10L0.4 5Z" fill="#c9cdea"/></svg>
<svg style="left:583.5px;top:110.5px" width="7" height="4" viewBox="0 0 7 4"><path d="M0 0H7L3.5 4Z" fill="#c9cdea"/></svg>
<svg style="left:608.5px;top:107px" width="7" height="10" viewBox="0 0 7 10"><path d="M0 0V10L6.6 5Z" fill="#3445b4"/></svg>
<svg style="left:627px;top:110.5px" width="7" height="4" viewBox="0 0 7 4"><path d="M0 0H7L3.5 4Z" fill="#3445b4"/></svg>
<svg style="left:648.5px;top:106px" width="13" height="12" viewBox="0 0 13 12"><rect x="2.6" y="0.4" width="7.8" height="3.4" fill="#e4e4e4"/><rect x="0.3" y="3.4" width="12.4" height="5.8" rx="1" fill="#bdbdbd"/><rect x="2.6" y="7.4" width="7.8" height="4.2" fill="#f1f1f1" stroke="#cfcfcf" stroke-width="0.6"/></svg>
<div style="left:680.5px;top:108px;width:1px;height:10px;background:repeating-linear-gradient(#5565c8 0,#5565c8 2px,transparent 2px,transparent 3px)"></div>
<svg style="left:694.5px;top:105px" width="14" height="14" viewBox="0 0 14 14"><path d="M4 6.6V4.2A3 3 0 0 1 10 4.2V6.6" fill="none" stroke="#d9dce0" stroke-width="1.5"/><rect x="0.5" y="6" width="13" height="8" rx="0.8" fill="#fbeeb4"/><path d="M7 8V12" stroke="#e9d78a" stroke-width="1.3"/></svg>
<svg style="left:716.5px;top:110.5px" width="7" height="4" viewBox="0 0 7 4"><path d="M0 0H7L3.5 4Z" fill="#c9cdea"/></svg>
<svg style="left:739.5px;top:104.5px" width="13" height="14" viewBox="0 0 13 14"><path d="M0.6 1.4Q0.6 0.4 1.6 0.4H6.6Q7.6 0.4 7.6 1.4V11.6L4.1 9L0.6 11.6Z" fill="#1e88e5"/><circle cx="9" cy="10.4" r="3.5" fill="#2e8b3a"/><path d="M9 8.4V12.4M7 10.4H11" stroke="#fff" stroke-width="1.3"/></svg>
<svg style="left:766px;top:106.5px" width="12" height="11.5" viewBox="0 0 12 11.5"><path d="M6 0.9L7.6 4.3L11.3 4.7L8.5 7.2L9.3 10.8L6 8.9L2.7 10.8L3.5 7.2L0.7 4.7L4.4 4.3Z" fill="none" stroke="#2196f3" stroke-width="1.3" stroke-linejoin="round"/></svg>
<div style="left:218px;top:129px;width:1457px;height:1px;background:#b9b9b9;"></div>
<div style="left:218px;top:130px;width:1457px;height:47px;background:#fdfdfd;"></div>
<svg style="left:227px;top:137px" width="28" height="30" viewBox="0 0 28 30"><path d="M0.8 0.8H14L21.2 8V28.4H0.8Z" fill="#f4f7fb" stroke="#78909c" stroke-width="1.2"/><path d="M14 0.8L21.2 8H14Z" fill="#90a4ae"/><rect x="3.6" y="4" width="8.4" height="2.6" fill="#29a3e0"/><path d="M3.6 10H18M3.6 13.6H18" stroke="#90a4ae" stroke-width="1.2"/><path d="M5.4 23Q6.6 16 8.6 18.4Q9.6 21.4 6 23.6M4 24.6H11" fill="none" stroke="#4a6fd0" stroke-width="1.1"/><circle cx="19" cy="20.9" r="8" fill="#fdb813"/><circle cx="19" cy="20.9" r="6.4" fill="none" stroke="#fec844" stroke-width="1"/><text x="15.4" y="25" font-family="DejaVu Sans, Liberation Sans, sans-serif" font-size="11" font-weight="bold" fill="#f39200">€</text></svg>
<span style="left:263.30px;top:136px;font-size:11.5px;color:#16162e;letter-spacing:-0.567px;">Abrechnungsverträge</span>
<span style="left:263.30px;top:153px;font-size:11.5px;color:#16162e;letter-spacing:-0.064px;">4372228733333335, Meine Bezeichnung BNEJKO3</span>
<div style="left:218px;top:177px;width:1457px;height:1px;background:#dedede;"></div>
<div style="left:218px;top:178px;width:1457px;height:422px;background:#f5f5f5;"></div>
<div style="left:226px;top:185px;width:1245px;height:407px;background:#fdfdfd;"></div>
<div style="left:226px;top:592px;width:1245px;height:1px;background:#c2c2c2;"></div>
<span style="left:237.20px;top:189px;font-size:10.5px;color:#16162e;letter-spacing:0.034px;">INFO</span>
<div style="left:274px;top:210px;width:1197px;height:1px;background:#e2e2e2;"></div>
<div style="left:226px;top:207px;width:48px;height:3px;background:#2e4797;"></div>
<span style="left:243.40px;top:230px;font-size:10px;color:#16162e;letter-spacing:0.074px;">Vertrags-Nr.</span>
<span style="left:243.40px;top:251px;font-size:10px;color:#16162e;letter-spacing:0.014px;">Vertragsbezeichnu⋯</span>
<span style="left:243.40px;top:283px;font-size:10px;color:#16162e;letter-spacing:0.345px;">Anlagenkonto</span>
<span style="left:243.40px;top:304px;font-size:10px;color:#16162e;letter-spacing:0.194px;">Vertragskonto</span>
<div style="left:353px;top:228px;width:475px;height:17px;background:#f6f6f6;border:1px solid #dedede;"></div>
<span style="left:355.40px;top:228px;font-size:10px;color:#16162e;letter-spacing:-0.362px;">4372228733333335</span>
<div style="left:353px;top:250px;width:475px;height:16px;background:#f6f6f6;border:1px solid #dedede;"></div>
<span style="left:355.40px;top:249px;font-size:10px;color:#16162e;letter-spacing:0.234px;">Meine Bezeichnung BNEJKO3</span>
<div style="left:353px;top:282px;width:445px;height:16px;background:#f6f6f6;border:1px solid #dedede;"></div>
<span style="left:355.40px;top:282px;font-size:10px;color:#16162e;letter-spacing:-0.057px;">999299-MALO-12995678908 MALO-12995678908 JSON TESTFIRMA50 LAUBACH</span>
<div style="left:353px;top:303px;width:445px;height:17px;background:#f6f6f6;border:1px solid #dedede;"></div>
<span style="left:355.40px;top:303px;font-size:10px;color:#16162e;letter-spacing:0.159px;">Meine Beschreibung BNEJKO JSON TESTFIRMA50 LAUBACH</span>
<svg style="left:799.5px;top:285px" width="11" height="10.5" viewBox="0 0 11 10.5"><path d="M4.6 1.3H2.2Q1 1.3 1 2.5V8.3Q1 9.5 2.2 9.5H8.4Q9.6 9.5 9.6 8.3V6" fill="none" stroke="#4558bb" stroke-width="1.5"/><path d="M6.4 0.8H10.2V4.6Z" fill="#4558bb"/><path d="M9.4 1.6L4 7" stroke="#4558bb" stroke-width="1.4"/></svg>
<svg style="left:815px;top:285.5px" width="10" height="10" viewBox="0 0 10 10"><circle cx="6.3" cy="3.3" r="2.6" fill="none" stroke="#c2c8e9" stroke-width="1.3"/><path d="M4.3 5.3L0.7 8.9" stroke="#c2c8e9" stroke-width="1.6" stroke-linecap="round"/></svg>
<svg style="left:799.5px;top:306px" width="11" height="10.5" viewBox="0 0 11 10.5"><path d="M4.6 1.3H2.2Q1 1.3 1 2.5V8.3Q1 9.5 2.2 9.5H8.4Q9.6 9.5 9.6 8.3V6" fill="none" stroke="#4558bb" stroke-width="1.5"/><path d="M6.4 0.8H10.2V4.6Z" fill="#4558bb"/><path d="M9.4 1.6L4 7" stroke="#4558bb" stroke-width="1.4"/></svg>
<svg style="left:815px;top:306.5px" width="10" height="10" viewBox="0 0 10 10"><circle cx="6.3" cy="3.3" r="2.6" fill="none" stroke="#c2c8e9" stroke-width="1.3"/><path d="M4.3 5.3L0.7 8.9" stroke="#c2c8e9" stroke-width="1.6" stroke-linecap="round"/></svg>
<span style="left:243.40px;top:337px;font-size:10px;color:#16162e;letter-spacing:0.061px;">Einzugsdatum</span>
<div style="left:353px;top:336px;width:63px;height:16px;background:#f6f6f6;border:1px solid #dedede;"></div>
<svg style="left:419.3px;top:337.6px" width="10" height="12" viewBox="0 0 10 12"><rect x="0.5" y="2" width="9" height="9.4" fill="#fdfdfe" stroke="#d0d5ef"/><rect x="0.5" y="2" width="9" height="2.2" fill="#d0d5ef"/><path d="M2.4 0.8V3M5 0.8V3M7.6 0.8V3" stroke="#d0d5ef" stroke-width="1.1"/><path d="M3.5 4.2V11.4M6.5 4.2V11.4M0.5 6.6H9.5M0.5 9H9.5" stroke="#d0d5ef" stroke-width="0.8"/></svg>
<span style="left:243.40px;top:359px;font-size:10px;color:#16162e;letter-spacing:0.099px;">Auszugsdatum</span>
<div style="left:353px;top:357px;width:63px;height:16px;background:#f6f6f6;border:1px solid #dedede;"></div>
<svg style="left:419.3px;top:358.6px" width="10" height="12" viewBox="0 0 10 12"><rect x="0.5" y="2" width="9" height="9.4" fill="#fdfdfe" stroke="#d0d5ef"/><rect x="0.5" y="2" width="9" height="2.2" fill="#d0d5ef"/><path d="M2.4 0.8V3M5 0.8V3M7.6 0.8V3" stroke="#d0d5ef" stroke-width="1.1"/><path d="M3.5 4.2V11.4M6.5 4.2V11.4M0.5 6.6H9.5M0.5 9H9.5" stroke="#d0d5ef" stroke-width="0.8"/></svg>
<span style="left:243.40px;top:380px;font-size:10px;color:#16162e;letter-spacing:0.117px;">Vertragsbeginn</span>
<div style="left:353px;top:379px;width:63px;height:16px;background:#f6f6f6;border:1px solid #dedede;"></div>
<span style="left:355.40px;top:378px;font-size:10px;color:#16162e;letter-spacing:-0.427px;">01.01.2021</span>
<svg style="left:419.3px;top:380.6px" width="10" height="12" viewBox="0 0 10 12"><rect x="0.5" y="2" width="9" height="9.4" fill="#fdfdfe" stroke="#d0d5ef"/><rect x="0.5" y="2" width="9" height="2.2" fill="#d0d5ef"/><path d="M2.4 0.8V3M5 0.8V3M7.6 0.8V3" stroke="#d0d5ef" stroke-width="1.1"/><path d="M3.5 4.2V11.4M6.5 4.2V11.4M0.5 6.6H9.5M0.5 9H9.5" stroke="#d0d5ef" stroke-width="0.8"/></svg>
<span style="left:243.40px;top:401px;font-size:10px;color:#16162e;letter-spacing:0.029px;">Vertragsende</span>
<div style="left:353px;top:400px;width:63px;height:16px;background:#f6f6f6;border:1px solid #dedede;"></div>
<span style="left:355.40px;top:400px;font-size:10px;color:#16162e;letter-spacing:-0.427px;">05.11.2022</span>
<svg style="left:419.3px;top:401.6px" width="10" height="12" viewBox="0 0 10 12"><rect x="0.5" y="2" width="9" height="9.4" fill="#fdfdfe" stroke="#d0d5ef"/><rect x="0.5" y="2" width="9" height="2.2" fill="#d0d5ef"/><path d="M2.4 0.8V3M5 0.8V3M7.6 0.8V3" stroke="#d0d5ef" stroke-width="1.1"/><path d="M3.5 4.2V11.4M6.5 4.2V11.4M0.5 6.6H9.5M0.5 9H9.5" stroke="#d0d5ef" stroke-width="0.8"/></svg>
<span style="left:243.40px;top:423px;font-size:10px;color:#16162e;letter-spacing:0.116px;">Verlängerungsdatum</span>
<div style="left:353px;top:422px;width:63px;height:16px;background:#f6f6f6;border:1px solid #dedede;"></div>
<span style="left:355.40px;top:421px;font-size:10px;color:#16162e;letter-spacing:-0.427px;">01.01.2020</span>
<svg style="left:419.3px;top:423.6px" width="10" height="12" viewBox="0 0 10 12"><rect x="0.5" y="2" width="9" height="9.4" fill="#fdfdfe" stroke="#d0d5ef"/><rect x="0.5" y="2" width="9" height="2.2" fill="#d0d5ef"/><path d="M2.4 0.8V3M5 0.8V3M7.6 0.8V3" stroke="#d0d5ef" stroke-width="1.1"/><path d="M3.5 4.2V11.4M6.5 4.2V11.4M0.5 6.6H9.5M0.5 9H9.5" stroke="#d0d5ef" stroke-width="0.8"/></svg>
<span style="left:243.40px;top:444px;font-size:10px;color:#16162e;letter-spacing:0.285px;">Kündigungsdatum</span>
<div style="left:353px;top:443px;width:63px;height:16px;background:#f6f6f6;border:1px solid #dedede;"></div>
<span style="left:355.40px;top:443px;font-size:10px;color:#16162e;letter-spacing:-0.427px;">16.12.2019</span>
<svg style="left:419.3px;top:444.6px" width="10" height="12" viewBox="0 0 10 12"><rect x="0.5" y="2" width="9" height="9.4" fill="#fdfdfe" stroke="#d0d5ef"/><rect x="0.5" y="2" width="9" height="2.2" fill="#d0d5ef"/><path d="M2.4 0.8V3M5 0.8V3M7.6 0.8V3" stroke="#d0d5ef" stroke-width="1.1"/><path d="M3.5 4.2V11.4M6.5 4.2V11.4M0.5 6.6H9.5M0.5 9H9.5" stroke="#d0d5ef" stroke-width="0.8"/></svg>
<span style="left:243.40px;top:466px;font-size:10px;color:#16162e;letter-spacing:0.141px;">Abschluss Kunde</span>
<div style="left:353px;top:465px;width:63px;height:16px;background:#f6f6f6;border:1px solid #dedede;"></div>
<svg style="left:419.3px;top:466.6px" width="10" height="12" viewBox="0 0 10 12"><rect x="0.5" y="2" width="9" height="9.4" fill="#fdfdfe" stroke="#d0d5ef"/><rect x="0.5" y="2" width="9" height="2.2" fill="#d0d5ef"/><path d="M2.4 0.8V3M5 0.8V3M7.6 0.8V3" stroke="#d0d5ef" stroke-width="1.1"/><path d="M3.5 4.2V11.4M6.5 4.2V11.4M0.5 6.6H9.5M0.5 9H9.5" stroke="#d0d5ef" stroke-width="0.8"/></svg>
<span style="left:243.40px;top:487px;font-size:10px;color:#16162e;letter-spacing:0.065px;">Abschluss Versorger</span>
<div style="left:353px;top:486px;width:63px;height:16px;background:#f6f6f6;border:1px solid #dedede;"></div>
<svg style="left:419.3px;top:487.6px" width="10" height="12" viewBox="0 0 10 12"><rect x="0.5" y="2" width="9" height="9.4" fill="#fdfdfe" stroke="#d0d5ef"/><rect x="0.5" y="2" width="9" height="2.2" fill="#d0d5ef"/><path d="M2.4 0.8V3M5 0.8V3M7.6 0.8V3" stroke="#d0d5ef" stroke-width="1.1"/><path d="M3.5 4.2V11.4M6.5 4.2V11.4M0.5 6.6H9.5M0.5 9H9.5" stroke="#d0d5ef" stroke-width="0.8"/></svg>
<span style="left:243.40px;top:509px;font-size:10px;color:#16162e;letter-spacing:-0.136px;">Aktiv im ERP</span>
<div style="left:353px;top:509px;width:17px;height:16px;background:#fbfbfb;border:1px solid #e2e2e2;border-radius:2px;"></div>
<svg style="left:356.3px;top:512.6px" width="11" height="9" viewBox="0 0 11 9"><path d="M1.2 4.8L3.9 7.4L9.6 1.4" fill="none" stroke="#b9c0e6" stroke-width="2"/></svg>
<span style="left:862.50px;top:230px;font-size:10px;color:#16162e;letter-spacing:-0.175px;">Serviceprovider</span>
<div style="left:972px;top:228px;width:452px;height:17px;background:#f6f6f6;border:1px solid #dedede;"></div>
<span style="left:974.40px;top:228px;font-size:10px;color:#16162e;letter-spacing:-0.011px;">Serviceprovider BNEJKO JSON TESTFIRMA50 LAUBACH 02 BITTE AENDERN</span>
<svg style="left:1426px;top:231px" width="11" height="10.5" viewBox="0 0 11 10.5"><path d="M4.6 1.3H2.2Q1 1.3 1 2.5V8.3Q1 9.5 2.2 9.5H8.4Q9.6 9.5 9.6 8.3V6" fill="none" stroke="#4558bb" stroke-width="1.5"/><path d="M6.4 0.8H10.2V4.6Z" fill="#4558bb"/><path d="M9.4 1.6L4 7" stroke="#4558bb" stroke-width="1.4"/></svg>
<svg style="left:1441.6px;top:231.5px" width="10" height="10" viewBox="0 0 10 10"><circle cx="6.3" cy="3.3" r="2.6" fill="none" stroke="#c2c8e9" stroke-width="1.3"/><path d="M4.3 5.3L0.7 8.9" stroke="#c2c8e9" stroke-width="1.6" stroke-linecap="round"/></svg>
<span style="left:862.50px;top:251px;font-size:10px;color:#16162e;letter-spacing:-0.023px;">Vertragsklasse</span>
<div style="left:972px;top:250px;width:452px;height:16px;background:#f6f6f6;border:1px solid #dedede;"></div>
<svg style="left:1426.4px;top:256.3px" width="10" height="4" viewBox="0 0 10 4"><path d="M0 0H10L5 4Z" fill="#c3c8ea"/></svg>
<svg style="left:1441.6px;top:253.5px" width="10" height="10" viewBox="0 0 10 10"><circle cx="6.3" cy="3.3" r="2.6" fill="none" stroke="#c2c8e9" stroke-width="1.3"/><path d="M4.3 5.3L0.7 8.9" stroke="#c2c8e9" stroke-width="1.6" stroke-linecap="round"/></svg>
<span style="left:862.50px;top:273px;font-size:10px;color:#16162e;letter-spacing:0.136px;">Statistikgruppe</span>
<div style="left:972px;top:271px;width:452px;height:16px;background:#f6f6f6;border:1px solid #dedede;"></div>
<span style="left:974.40px;top:271px;font-size:10px;color:#16162e;letter-spacing:-0.091px;">My statistic mark</span>
<svg style="left:1426.4px;top:277.3px" width="10" height="4" viewBox="0 0 10 4"><path d="M0 0H10L5 4Z" fill="#c3c8ea"/></svg>
<svg style="left:1441.6px;top:274.5px" width="10" height="10" viewBox="0 0 10 10"><circle cx="6.3" cy="3.3" r="2.6" fill="none" stroke="#c2c8e9" stroke-width="1.3"/><path d="M4.3 5.3L0.7 8.9" stroke="#c2c8e9" stroke-width="1.6" stroke-linecap="round"/></svg>
<span style="left:862.50px;top:294px;font-size:10px;color:#16162e;letter-spacing:0.267px;">Abr.Sperrgrund</span>
<div style="left:972px;top:293px;width:452px;height:16px;background:#f6f6f6;border:1px solid #dedede;"></div>
<svg style="left:1426.4px;top:299.3px" width="10" height="4" viewBox="0 0 10 4"><path d="M0 0H10L5 4Z" fill="#c3c8ea"/></svg>
<svg style="left:1441.6px;top:296.5px" width="10" height="10" viewBox="0 0 10 10"><circle cx="6.3" cy="3.3" r="2.6" fill="none" stroke="#c2c8e9" stroke-width="1.3"/><path d="M4.3 5.3L0.7 8.9" stroke="#c2c8e9" stroke-width="1.6" stroke-linecap="round"/></svg>
<span style="left:862.50px;top:315px;font-size:10px;color:#16162e;letter-spacing:0.115px;">Bearbeitungsstatus</span>
<div style="left:972px;top:314px;width:452px;height:16px;background:#f6f6f6;border:1px solid #dedede;"></div>
<span style="left:974.40px;top:314px;font-size:10px;color:#16162e;letter-spacing:0.160px;">Vertrag wartet auf Beginnablesung</span>
<svg style="left:1426.4px;top:320.3px" width="10" height="4" viewBox="0 0 10 4"><path d="M0 0H10L5 4Z" fill="#c3c8ea"/></svg>
<svg style="left:1441.6px;top:317.5px" width="10" height="10" viewBox="0 0 10 10"><circle cx="6.3" cy="3.3" r="2.6" fill="none" stroke="#c2c8e9" stroke-width="1.3"/><path d="M4.3 5.3L0.7 8.9" stroke="#c2c8e9" stroke-width="1.6" stroke-linecap="round"/></svg>
<span style="left:862.50px;top:337px;font-size:10px;color:#16162e;letter-spacing:-0.131px;">Serviceanb. (fakt.)</span>
<div style="left:972px;top:336px;width:452px;height:16px;background:#f6f6f6;border:1px solid #dedede;"></div>
<svg style="left:1426px;top:339px" width="11" height="10.5" viewBox="0 0 11 10.5"><path d="M4.6 1.3H2.2Q1 1.3 1 2.5V8.3Q1 9.5 2.2 9.5H8.4Q9.6 9.5 9.6 8.3V6" fill="none" stroke="#c9cdea" stroke-width="1.5"/><path d="M6.4 0.8H10.2V4.6Z" fill="#c9cdea"/><path d="M9.4 1.6L4 7" stroke="#c9cdea" stroke-width="1.4"/></svg>
<svg style="left:1441.6px;top:339.5px" width="10" height="10" viewBox="0 0 10 10"><circle cx="6.3" cy="3.3" r="2.6" fill="none" stroke="#c2c8e9" stroke-width="1.3"/><path d="M4.3 5.3L0.7 8.9" stroke="#c2c8e9" stroke-width="1.6" stroke-linecap="round"/></svg>
<span style="left:862.50px;top:359px;font-size:10px;color:#16162e;letter-spacing:0.428px;">Kontenfindung</span>
<div style="left:972px;top:357px;width:482px;height:16px;background:#f6f6f6;border:1px solid #dedede;"></div>
<span style="left:862.50px;top:380px;font-size:10px;color:#16162e;letter-spacing:0.088px;">Anlagennummer</span>
<div style="left:972px;top:379px;width:482px;height:16px;background:#f6f6f6;border:1px solid #dedede;"></div>
<span style="left:974.40px;top:378px;font-size:10px;color:#16162e;letter-spacing:-0.409px;">12995678908</span>
<span style="left:862.50px;top:401px;font-size:10px;color:#16162e;letter-spacing:0.147px;">Buchungskreis</span>
<div style="left:972px;top:400px;width:452px;height:16px;background:#f6f6f6;border:1px solid #dedede;"></div>
<svg style="left:1426.4px;top:406.3px" width="10" height="4" viewBox="0 0 10 4"><path d="M0 0H10L5 4Z" fill="#c3c8ea"/></svg>
<svg style="left:1441.6px;top:403.5px" width="10" height="10" viewBox="0 0 10 10"><circle cx="6.3" cy="3.3" r="2.6" fill="none" stroke="#c2c8e9" stroke-width="1.3"/><path d="M4.3 5.3L0.7 8.9" stroke="#c2c8e9" stroke-width="1.6" stroke-linecap="round"/></svg>
<span style="left:862.50px;top:434px;font-size:10px;color:#16162e;letter-spacing:0.268px;">Kündigungsfrist</span>
<div style="left:972px;top:435px;width:44px;height:16px;background:#f6f6f6;border:1px solid #dedede;"></div>
<span style="left:1007.62px;top:435px;font-size:10px;color:#16162e;">4</span>
<div style="left:1018px;top:435px;width:403px;height:16px;background:#f6f6f6;border:1px solid #dedede;"></div>
<span style="left:1020.70px;top:435px;font-size:10px;color:#16162e;letter-spacing:0.367px;">Monate</span>
<svg style="left:1424px;top:441.3px" width="10" height="4" viewBox="0 0 10 4"><path d="M0 0H10L5 4Z" fill="#c3c8ea"/></svg>
<svg style="left:1438.6px;top:438.5px" width="10" height="10" viewBox="0 0 10 10"><circle cx="6.3" cy="3.3" r="2.6" fill="none" stroke="#c2c8e9" stroke-width="1.3"/><path d="M4.3 5.3L0.7 8.9" stroke="#c2c8e9" stroke-width="1.6" stroke-linecap="round"/></svg>
<span style="left:862.50px;top:455px;font-size:10px;color:#16162e;letter-spacing:0.130px;">Verlängerungsfrist</span>
<div style="left:972px;top:457px;width:44px;height:16px;background:#f6f6f6;border:1px solid #dedede;"></div>
<span style="left:1007.62px;top:456px;font-size:10px;color:#16162e;">4</span>
<div style="left:1018px;top:457px;width:403px;height:16px;background:#f6f6f6;border:1px solid #dedede;"></div>
<span style="left:1020.70px;top:456px;font-size:10px;color:#16162e;letter-spacing:0.406px;">Jahre</span>
<svg style="left:1424px;top:463.3px" width="10" height="4" viewBox="0 0 10 4"><path d="M0 0H10L5 4Z" fill="#c3c8ea"/></svg>
<svg style="left:1438.6px;top:460.5px" width="10" height="10" viewBox="0 0 10 10"><circle cx="6.3" cy="3.3" r="2.6" fill="none" stroke="#c2c8e9" stroke-width="1.3"/><path d="M4.3 5.3L0.7 8.9" stroke="#c2c8e9" stroke-width="1.6" stroke-linecap="round"/></svg>
<span style="left:862.50px;top:477px;font-size:10px;color:#16162e;letter-spacing:0.008px;">Max. Anzahl Verl.</span>
<div style="left:972px;top:478px;width:74px;height:16px;background:#f6f6f6;border:1px solid #dedede;"></div>
<span style="left:862.50px;top:509px;font-size:10px;color:#16162e;letter-spacing:0.156px;">Abrechnungsart</span>
<div style="left:972px;top:508px;width:452px;height:16px;background:#f6f6f6;border:1px solid #dedede;"></div>
<span style="left:974.40px;top:507px;font-size:10px;color:#16162e;letter-spacing:0.346px;">Turnusabrechnung</span>
<svg style="left:1426.4px;top:514.3px" width="10" height="4" viewBox="0 0 10 4"><path d="M0 0H10L5 4Z" fill="#c3c8ea"/></svg>
<svg style="left:1441.6px;top:511.5px" width="10" height="10" viewBox="0 0 10 10"><circle cx="6.3" cy="3.3" r="2.6" fill="none" stroke="#c2c8e9" stroke-width="1.3"/><path d="M4.3 5.3L0.7 8.9" stroke="#c2c8e9" stroke-width="1.6" stroke-linecap="round"/></svg>
<span style="left:862.50px;top:530px;font-size:10px;color:#16162e;letter-spacing:-0.203px;">Sparte</span>
<svg style="left:974px;top:531px" width="10" height="11" viewBox="0 0 10 11"><path d="M0.4 9.4L3.4 5.2L6.4 7.6L3.2 10.8Q1.2 11.2 0.4 9.4Z" fill="#6b7a88"/><path d="M3.8 4.8L5 3.4L8 5.8L6.8 7.2Z" fill="#90a4ae"/><path d="M5.4 0.6L6.2 2.8M8.4 1.6L7.6 3.6M9.8 4.2L8.4 4.8" stroke="#f5b800" stroke-width="1.2" stroke-linecap="round"/></svg>
<div style="left:987px;top:529px;width:437px;height:16px;background:#f6f6f6;border:1px solid #dedede;"></div>
<span style="left:989.50px;top:529px;font-size:10px;color:#16162e;letter-spacing:-0.106px;">Strom</span>
<svg style="left:1426.4px;top:535.3px" width="10" height="4" viewBox="0 0 10 4"><path d="M0 0H10L5 4Z" fill="#c3c8ea"/></svg>
<svg style="left:1441.6px;top:532.5px" width="10" height="10" viewBox="0 0 10 10"><circle cx="6.3" cy="3.3" r="2.6" fill="none" stroke="#c2c8e9" stroke-width="1.3"/><path d="M4.3 5.3L0.7 8.9" stroke="#c2c8e9" stroke-width="1.6" stroke-linecap="round"/></svg>
<span style="left:1499.20px;top:191px;font-size:10.5px;color:#8a8a8a;letter-spacing:0.025px;">Aktionen</span>
<svg style="left:1499.7px;top:227px" width="7" height="4" viewBox="0 0 7 4"><path d="M0 0H7L3.5 4Z" fill="#3445b4"/></svg>
<svg style="left:1509px;top:224px" width="15" height="12" viewBox="0 0 22 17"><path d="M1 2.2Q1 0.6 2.4 0.6H8L10 3H20Q21.4 3 21.4 4.4V15Q21.4 16.4 20 16.4H2.4Q1 16.4 1 15Z" fill="#f6d06b"/><path d="M1 5.5H21.4V15Q21.4 16.4 20 16.4H2.4Q1 16.4 1 15Z" fill="#f9da84"/></svg>
<span style="left:1530.00px;top:221px;font-size:10.5px;color:#16162e;letter-spacing:-0.101px;">Schleupen</span>
<svg style="left:1527px;top:249px" width="13" height="13" viewBox="0 0 13 13"><circle cx="6.5" cy="6.5" r="6.5" fill="#2196f3"/><path d="M4.8 3.2L10 6.5L4.8 9.8Z" fill="#fff"/></svg>
<span style="left:1547.20px;top:246px;font-size:10.5px;color:#16162e;letter-spacing:-0.228px;">Vertrag suchen</span>
<svg style="left:1481px;top:386px" width="5" height="8" viewBox="0 0 5 8"><path d="M0.8 0.8L4 4L0.8 7.2" fill="none" stroke="#3445b4" stroke-width="1.2"/></svg>
<div style="left:218px;top:594px;width:1457px;height:6px;background:linear-gradient(#f5f5f5,#e6e6e6)"></div>
<div style="left:218px;top:600px;width:1457px;height:9px;background:#fdfdfd;"></div>
<svg style="left:933px;top:601.5px" width="7" height="5" viewBox="0 0 7 5"><path d="M0.8 0.8L3.5 3.6L6.2 0.8" fill="none" stroke="#3445b4" stroke-width="1.2"/></svg>
<svg style="left:954px;top:601.5px" width="7" height="5" viewBox="0 0 7 5"><path d="M0.8 4.2L3.5 1.4L6.2 4.2" fill="none" stroke="#3445b4" stroke-width="1.2"/></svg>
<div style="left:218px;top:609px;width:1457px;height:287px;background:#fdfdfd;"></div>
<div style="left:218px;top:609px;width:1457px;height:13px;background:linear-gradient(#e5e5e5,#f3f3f3 45%,#fdfdfd)"></div>
<svg style="left:227.5px;top:618px" width="14" height="14" viewBox="0 0 14 14"><rect x="0.4" y="0.4" width="11.2" height="11.4" rx="0.6" fill="#2196f3"/><rect x="0.4" y="0.4" width="11.2" height="2.8" fill="#1976d2"/><path d="M2.2 5H3.6M5.2 5H6.6M8.2 5H9.6M2.2 7.3H3.6M5.2 7.3H6.6M8.2 7.3H9.6M2.2 9.6H3.6M5.2 9.6H6.6" stroke="#e3f2fd" stroke-width="1.2"/><circle cx="10.6" cy="10.9" r="2.9" fill="#fbc02d"/></svg>
<span style="left:246.30px;top:615px;font-size:10.5px;color:#16162e;letter-spacing:-0.492px;">ABSCHLAGSPLAN (1)</span>
<svg style="left:357.90000000000003px;top:621.1999999999999px" width="6.4" height="6.4" viewBox="0 0 6.4 6.4"><path d="M0.5 0.5L5.9 5.9M5.9 0.5L0.5 5.9" stroke="#3445b4" stroke-width="1.9"/></svg>
<div style="left:219px;top:639px;width:154px;height:3px;background:#2e4797;"></div>
<div style="left:373px;top:642px;width:1291px;height:1px;background:#e2e2e2;"></div>
<svg style="left:391.7px;top:619.6px" width="2.6" height="9.6" viewBox="0 0 2.6 9.6"><rect x="0" y="0" width="2.4" height="2.2" fill="#3445b4"/><rect x="0" y="3.7" width="2.4" height="2.2" fill="#3445b4"/><rect x="0" y="7.4" width="2.4" height="2.2" fill="#3445b4"/></svg>
<span style="left:405.30px;top:615px;font-size:10.5px;color:#858585;letter-spacing:-0.429px;">WEITERE BEREICHE</span>
<svg style="left:228.5px;top:649px" width="17" height="17" viewBox="0 0 17 17"><rect x="0.5" y="0.8" width="13" height="11" fill="#fdfdfd" stroke="#9fb3d9" stroke-width="0.8"/><path d="M0.5 3.4H13.5" stroke="#2e8b3a" stroke-width="1.7"/><path d="M0.5 6H13.5M0.5 8.6H13.5M3.8 0.8V11.8M7 0.8V11.8M10.2 0.8V11.8" stroke="#9fb3d9" stroke-width="0.7"/><circle cx="11.6" cy="11.6" r="4.2" fill="#2e8b3a"/><path d="M11.6 9.2V14M9.2 11.6H14" stroke="#fff" stroke-width="1.5"/></svg>
<svg style="left:251.3px;top:655px" width="7" height="4" viewBox="0 0 7 4"><path d="M0 0H7L3.5 4Z" fill="#3445b4"/></svg>
<svg style="left:272px;top:650px" width="16" height="15" viewBox="0 0 16 15"><path d="M1 4H11.5" stroke="#b9dcbb" stroke-width="1.7"/><path d="M10 0.6L14.6 4L10 7.4Z" fill="#b9dcbb"/><path d="M14.6 10H4" stroke="#b9dcbb" stroke-width="1.7"/><path d="M5.6 6.6L1 10L5.6 13.4Z" fill="#b9dcbb"/><path d="M8 14L14 8" stroke="#f6d9a6" stroke-width="1.5"/></svg>
<svg style="left:299.5px;top:650px" width="15" height="15" viewBox="0 0 15 15"><rect x="0.7" y="0.7" width="9.6" height="9.4" fill="#eef1fa" stroke="#3f51b5" stroke-width="1"/><path d="M3.6 0.7V10.1" stroke="#3f51b5" stroke-width="0.9"/><path d="M3.6 3.6H10.3M3.6 6.4H10.3" stroke="#9fa8da" stroke-width="0.7"/><circle cx="9.4" cy="9.2" r="3" fill="#64b5f6" stroke="#e8eef8" stroke-width="0.8"/><path d="M11.6 11.6L14.2 14.4" stroke="#37474f" stroke-width="1.5"/></svg>
<div style="left:327px;top:653px;width:1px;height:10px;background:repeating-linear-gradient(#5565c8 0,#5565c8 2px,transparent 2px,transparent 3px)"></div>
<svg style="left:342px;top:652.5px" width="12" height="10" viewBox="0 0 12 10"><path d="M0 1H11M0 4.8H11M0 8.6H11" stroke="#3d4ec4" stroke-width="1.7"/></svg>
<div style="left:368px;top:653px;width:1px;height:10px;background:repeating-linear-gradient(#5565c8 0,#5565c8 2px,transparent 2px,transparent 3px)"></div>
<svg style="left:381.5px;top:650.5px" width="15" height="14" viewBox="0 0 15 14"><rect x="4.8" y="0.5" width="9.2" height="8.6" fill="#e8f3fd" stroke="#90caf9" stroke-width="0.9"/><path d="M4.8 3.2H14M7.8 0.5V9M11 0.5V9" stroke="#90caf9" stroke-width="0.7"/><rect x="0.7" y="4.6" width="9.2" height="8.6" fill="#eef6fb" stroke="#388e3c" stroke-width="1.3"/><path d="M0.7 7.4H9.9M0.7 10.2H9.9M3.8 4.6V13.2M6.9 4.6V13.2" stroke="#90caf9" stroke-width="0.7"/></svg>
<svg style="left:404.2px;top:655px" width="7" height="4" viewBox="0 0 7 4"><path d="M0 0H7L3.5 4Z" fill="#3445b4"/></svg>
<svg style="left:425.5px;top:651px" width="14" height="12" viewBox="0 0 14 12"><rect x="0.6" y="0.6" width="3.6" height="3.6" fill="none" stroke="#3f51b5" stroke-width="1.1"/><rect x="0.6" y="6.6" width="3.6" height="3.6" fill="none" stroke="#3f51b5" stroke-width="1.1"/><path d="M6.4 2.4H13.4M6.4 8.4H13.4" stroke="#3f51b5" stroke-width="1.7"/></svg>
<svg style="left:447.3px;top:655px" width="7" height="4" viewBox="0 0 7 4"><path d="M0 0H7L3.5 4Z" fill="#3445b4"/></svg>
<div style="left:469px;top:653px;width:1px;height:10px;background:repeating-linear-gradient(#5565c8 0,#5565c8 2px,transparent 2px,transparent 3px)"></div>
<div style="left:478px;top:650px;width:198px;height:18px;background:#fdfdfd;border:1px solid #e0e0e0;"></div>
<div style="left:655px;top:650px;width:21px;height:18px;background:#f4f4f4;border:1px solid #e0e0e0;"></div>
<svg style="left:662.5px;top:655.8px" width="6" height="3.5" viewBox="0 0 6 3.5"><path d="M0 0H6L3.0 3.5Z" fill="#b4bbe6"/></svg>
<span style="left:480.60px;top:649px;font-size:10.5px;color:#a6a6a6;letter-spacing:-0.160px;">Standard</span>
<div style="left:679px;top:650px;width:122px;height:18px;background:#fdfdfd;border:1px solid #dcdcdc;"></div>
<svg style="left:807px;top:652.5px" width="14" height="13" viewBox="0 0 14 13"><circle cx="8.8" cy="5" r="4.1" fill="#5eb1f6" stroke="#2d8fe3" stroke-width="1"/><path d="M5.6 8.2L1.2 12" stroke="#37474f" stroke-width="1.9" stroke-linecap="round"/></svg>
<svg style="left:1596.5px;top:649.5px" width="15" height="16" viewBox="0 0 15 16"><rect x="4.4" y="0.6" width="4.4" height="11.4" fill="#e3f2fd" stroke="#90caf9" stroke-width="0.7"/><path d="M4.4 3.4H8.8M4.4 6.2H8.8M4.4 9H8.8" stroke="#90caf9" stroke-width="0.7"/><rect x="0.6" y="0.6" width="3.8" height="11.6" fill="#fdfdfd" stroke="#43a047" stroke-width="1.1"/><path d="M0.6 3.5H4.4M0.6 6.3H4.4M0.6 9.1H4.4" stroke="#81c784" stroke-width="0.8"/><path d="M10.6 6.6L4 14.6" stroke="#546e7a" stroke-width="1.5" stroke-linecap="round"/><path d="M9.6 5Q10 7.4 12.6 7" fill="none" stroke="#546e7a" stroke-width="1.4"/><path d="M7.8 9.8L12.2 13.6" stroke="#ffb300" stroke-width="2.3" stroke-linecap="round"/></svg>
<svg style="left:1617.8px;top:655.3px" width="6.6" height="3.8" viewBox="0 0 6.6 3.8"><path d="M0 0H6.6L3.3 3.8Z" fill="#3445b4"/></svg>
<svg style="left:1639.8px;top:654px" width="14" height="7" viewBox="0 0 14 7"><path d="M0.2 3.5H6" stroke="#d5e3ee" stroke-width="1.3"/><path d="M5.4 0V7L7.6 6V1Z" fill="#2196f3"/><rect x="7.4" y="1.7" width="5" height="3.6" fill="#1e88e5"/><path d="M12 1.2L13.4 0.6V6.4L12 5.8Z" fill="#2196f3"/></svg>
<div style="left:1665px;top:610px;width:1px;height:286px;background:#f1f1f1;"></div>
<div style="left:219px;top:674px;width:1445px;height:1px;background:#e4e4e4;"></div>
<div style="left:324px;top:675px;width:1px;height:41px;background:linear-gradient(#e0e0e0,#d4d4d4)"></div>
<span style="left:404.08px;top:676px;font-size:11px;color:#808080;letter-spacing:-0.339px;">Referenz-Nr.</span>
<div style="left:330px;top:693px;width:211px;height:19px;background:#fefefe;border:1px solid #d9d9d9;"></div>
<div style="left:547px;top:675px;width:1px;height:41px;background:linear-gradient(#e0e0e0,#d4d4d4)"></div>
<span style="left:645.94px;top:676px;font-size:11px;color:#808080;letter-spacing:-0.618px;">Ende</span>
<div style="left:554px;top:693px;width:211px;height:19px;background:#fefefe;border:1px solid #d9d9d9;"></div>
<div style="left:770px;top:675px;width:1px;height:41px;background:linear-gradient(#e0e0e0,#d4d4d4)"></div>
<span style="left:835.45px;top:676px;font-size:11px;color:#808080;letter-spacing:-0.308px;">Abschlagsplan-Nr.</span>
<div style="left:777px;top:693px;width:211px;height:19px;background:#fefefe;border:1px solid #d9d9d9;"></div>
<div style="left:994px;top:675px;width:1px;height:41px;background:linear-gradient(#e0e0e0,#d4d4d4)"></div>
<span style="left:1056.96px;top:676px;font-size:11px;color:#808080;letter-spacing:-0.476px;">Abrechungsvertrag</span>
<div style="left:1000px;top:693px;width:211px;height:19px;background:#fefefe;border:1px solid #d9d9d9;"></div>
<div style="left:1217px;top:675px;width:1px;height:41px;background:linear-gradient(#e0e0e0,#d4d4d4)"></div>
<span style="left:1310.44px;top:676px;font-size:11px;color:#808080;letter-spacing:-0.216px;">Beginn</span>
<div style="left:1223px;top:693px;width:211px;height:19px;background:#fefefe;border:1px solid #d9d9d9;"></div>
<div style="left:1440px;top:675px;width:1px;height:41px;background:linear-gradient(#e0e0e0,#d4d4d4)"></div>
<span style="left:1510.59px;top:676px;font-size:11px;color:#808080;letter-spacing:-0.512px;">Abschlagszyklus</span>
<div style="left:1446px;top:693px;width:211px;height:19px;background:#fefefe;border:1px solid #d9d9d9;"></div>
<div style="left:219px;top:715px;width:1445px;height:1px;background:#e4e4e4;"></div>
<div style="left:220px;top:716px;width:1444px;height:24px;background:#c1d4f1;"></div>
<div style="left:220px;top:740px;width:1444px;height:1px;background:#e4e4e4;"></div>
<svg style="left:228.5px;top:721px" width="13" height="13" viewBox="0 0 14 14"><rect x="0.4" y="0.4" width="11.2" height="11.4" rx="0.6" fill="#2196f3"/><rect x="0.4" y="0.4" width="11.2" height="2.8" fill="#1976d2"/><path d="M2.2 5H3.6M5.2 5H6.6M8.2 5H9.6M2.2 7.3H3.6M5.2 7.3H6.6M8.2 7.3H9.6M2.2 9.6H3.6M5.2 9.6H6.6" stroke="#e3f2fd" stroke-width="1.2"/><circle cx="10.6" cy="10.9" r="2.9" fill="#fbc02d"/></svg>
<svg style="left:246.3px;top:725.5px" width="7" height="4" viewBox="0 0 7 4"><path d="M0 0H7L3.5 4Z" fill="#3445b4"/></svg>
<span style="left:553.10px;top:718px;font-size:10.5px;color:#16162e;letter-spacing:-0.607px;">05.11.2022 00:00</span>
<span style="left:776.50px;top:718px;font-size:10.5px;color:#16162e;letter-spacing:-0.681px;">4372228733333335</span>
<span style="left:999.70px;top:718px;font-size:10.5px;color:#16162e;letter-spacing:-0.681px;">4372228733333335</span>
<span style="left:1223.10px;top:718px;font-size:10.5px;color:#16162e;letter-spacing:-0.607px;">01.01.2021 00:00</span>
<span style="left:1645.42px;top:718px;font-size:10.5px;color:#16162e;letter-spacing:-0.800px;">15</span>
<svg style="left:1669px;top:748.5px" width="5" height="8" viewBox="0 0 5 8"><path d="M4.2 0.8L1 4L4.2 7.2" fill="none" stroke="#3445b4" stroke-width="1.2"/></svg>
<div style="left:219px;top:865px;width:1445px;height:1px;background:#dcdcdc;"></div>
<div style="left:223px;top:869px;width:27px;height:21px;background:#f3f3f3;border:1px solid #e1e1e1;"></div>
<svg style="left:232.5px;top:877px" width="8" height="6" viewBox="0 0 8 6"><rect x="0" y="0.5" width="1.4" height="5" fill="#c3c8ea"/><path d="M7.6 0.4V5.6L2.4 3Z" fill="#c3c8ea"/></svg>
<div style="left:252px;top:869px;width:27px;height:21px;background:#f3f3f3;border:1px solid #e1e1e1;"></div>
<svg style="left:261.5px;top:877px" width="8" height="6" viewBox="0 0 8 6"><path d="M6.6 0.4V5.6L1.4 3Z" fill="#c3c8ea"/></svg>
<div style="left:313px;top:869px;width:27px;height:21px;background:#f3f3f3;border:1px solid #e1e1e1;"></div>
<svg style="left:322.5px;top:877px" width="8" height="6" viewBox="0 0 8 6"><path d="M1.4 0.4V5.6L6.6 3Z" fill="#c3c8ea"/></svg>
<div style="left:342px;top:869px;width:27px;height:21px;background:#f3f3f3;border:1px solid #e1e1e1;"></div>
<svg style="left:351.5px;top:877px" width="8" height="6" viewBox="0 0 8 6"><rect x="6.6" y="0.5" width="1.4" height="5" fill="#c3c8ea"/><path d="M0.4 0.4V5.6L5.6 3Z" fill="#c3c8ea"/></svg>
<div style="left:287px;top:869px;width:18px;height:21px;background:#fdfdfd;border:1px solid #9e9e9e;"></div>
<span style="left:292.96px;top:870px;font-size:10.5px;color:#16162e;">1</span>
<span style="left:386.20px;top:870px;font-size:10.5px;color:#16162e;letter-spacing:-0.252px;">1 Eintrag</span>
</body></html>
